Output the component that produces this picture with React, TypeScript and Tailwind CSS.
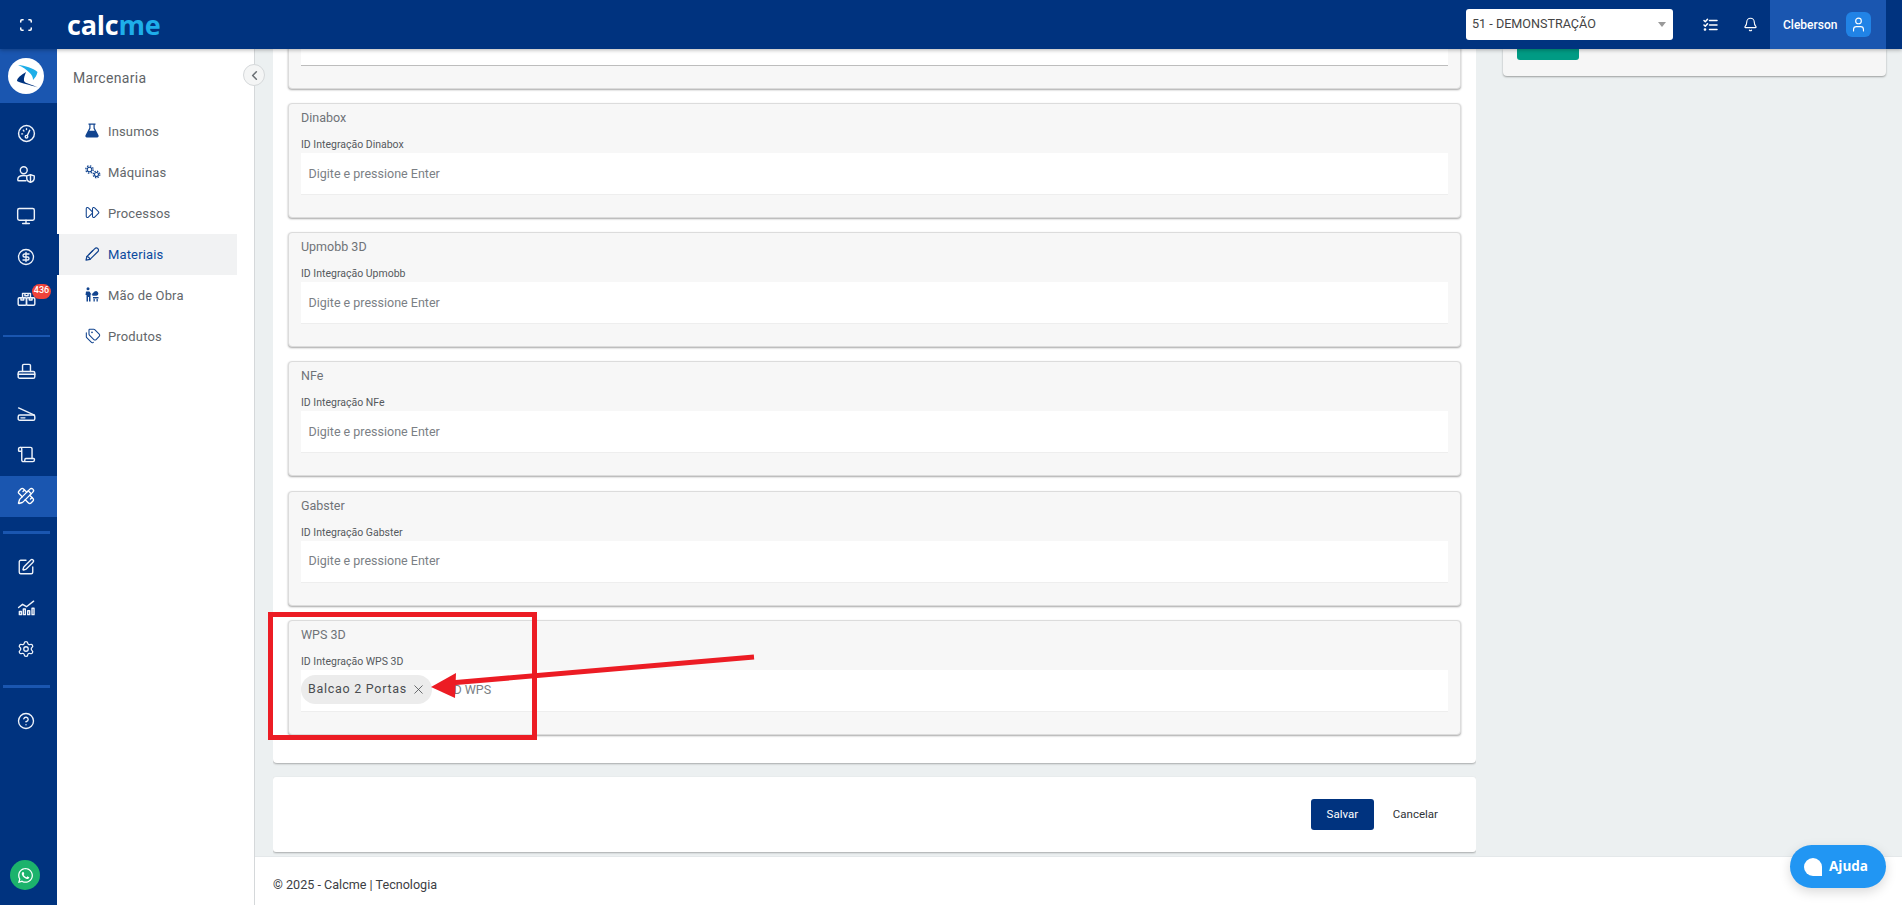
import { Bell, ChevronLeft, CircleDollarSign, CircleHelp, FastForward, Monitor, PencilRuler, Scan, Scroll, Settings, SquarePen, Tags, User, X } from "lucide-react";
import { FaWhatsapp } from "react-icons/fa";
import type { ReactNode } from "react";

const sw = { fill: "none", stroke: "currentColor", strokeWidth: 1.8, strokeLinecap: "round", strokeLinejoin: "round" } as const;

const Svg = ({ children, size = 19 }: { children: ReactNode; size?: number }) => (
  <svg width={size} height={size} viewBox="0 0 24 24" {...sw}>{children}</svg>
);

const GaugeIcon = () => (
  <Svg>
    <circle cx="12" cy="12" r="10" />
    <circle cx="12" cy="16" r="1.6" />
    <path d="M13 14.500 16 8M6 12.500h1M8 8l.7.7M12 6v1" />
  </Svg>
);
const UserShield = () => (
  <svg width="20" height="18" viewBox="0 0 26 24" {...sw} strokeWidth={1.9}>
    <circle cx="10" cy="7" r="4.600" />
    <path d="M13 21H3.500A1.500 1.500 0 0 1 2 19.500C2 16 5 14 10 14c1.500 0 2.500.2 3.500.5" />
    <path d="M19 13l5 1.500v3c0 2.500-2 4.500-5 5.500-3-1-5-3-5-5.500v-3z" />
    <path d="M19 13v10" />
  </svg>
);
const BoxesIcon = () => (
  <Svg>
    <path d="M7 11V5.500h10V11M10 5.500v3h4v-3" />
    <rect x="1.500" y="11" width="10.500" height="9.500" rx="1.500" />
    <rect x="12" y="11" width="10.500" height="9.500" rx="1.500" />
    <path d="M5 11v3h3.500v-3M15.500 11v3H19v-3" />
  </Svg>
);
const PrinterIcon = () => (
  <Svg>
    <path d="M7 12V4.500A1.500 1.500 0 0 1 8.500 3h7A1.500 1.500 0 0 1 17 4.500V12" />
    <rect x="1.500" y="12" width="21" height="8.500" rx="2" />
    <path d="M1.500 15.500h21" />
  </Svg>
);
const ScannerIcon = () => (
  <Svg>
    <path d="M2 5l20 9" />
    <rect x="1.500" y="14" width="21" height="6.500" rx="2" />
    <path d="M5 17.500h5" />
  </Svg>
);
const ChartIcon = () => (
  <Svg>
    <path d="M2 12l5-4 5 3 9-7" />
    <path d="M3 21v-4h2.500v4zM8 21v-7h2.500v7zM13.500 21v-5H16v5zM19 21v-8h2.500v8z" />
  </Svg>
);
const ChecklistIcon = () => (
  <svg width="15" height="13" viewBox="0 0 15 13" fill="none" stroke="currentColor" strokeWidth="1.500" strokeLinecap="round" strokeLinejoin="round">
    <path d="M1 2.500l1.300 1.300L4.500 1.200M1 7l1.300 1.300L4.500 5.700M6.500 2.500H14M6.500 7H14M6.500 11.500H14" />
    <circle cx="2" cy="11.500" r=".6" />
  </svg>
);
const FlaskIcon = () => (
  <svg width="14" height="15" viewBox="0 0 14 15" fill="currentColor">
    <path d="M3.500 0.500h7v1.200H9.700v3.400l3.800 7.200c.5 1-.2 2.200-1.300 2.200H1.800C.7 14.500 0 13.300.5 12.300l3.800-7.200V1.700h-.8zM5.500 1.700v3.700L4.300 7.800h5.400L8.500 5.400V1.700z" fillRule="evenodd" />
  </svg>
);
const GearsIcon = () => (
  <svg width="16" height="14" viewBox="0 0 16 14" fill="none" stroke="currentColor">
    <circle cx="4.500" cy="4.500" r="2.300" strokeWidth="1.100" />
    <circle cx="4.500" cy="4.500" r="3.700" strokeWidth="1.300" strokeDasharray="1.500 1.400" />
    <circle cx="11.500" cy="9.500" r="2" strokeWidth="1.100" />
    <circle cx="11.500" cy="9.500" r="3.300" strokeWidth="1.300" strokeDasharray="1.400 1.200" />
  </svg>
);
const PenIcon = () => (
  <svg width="15" height="14" viewBox="0 0 15 14" fill="none" stroke="currentColor" strokeWidth="1.200" strokeLinejoin="round" strokeLinecap="round">
    <path d="M1 13.200l.9-3.700L9.600 1.800c1-1 2.500-1 3.300-.2.800.8.800 2.300-.2 3.200L5 12.400z" />
    <path d="M1.900 9.500c1.200.1 3 1.700 3.100 2.900M4 7.400l3.700-3.700" />
  </svg>
);
const WorkerIcon = () => (
  <svg width="14" height="15" viewBox="0 0 14 15" fill="currentColor">
    <circle cx="3" cy="1.800" r="1.500" />
    <path d="M1 4.500h3.500l2 3h-1v7H4v-4.500H3v4.500H1.500V8H.5z" />
    <path d="M7 7l2.500-2.500a2.400 2.400 0 1 1 2 4.300H7.500zM8 10h5.500v1.500H8zM8.500 12h1.300v2.500H8.500zM11.500 12h1.300v2.500h-1.300z" />
  </svg>
);
const Swoosh = () => (
  <svg width="36" height="36" viewBox="0 0 36 36">
    <circle cx="18" cy="18" r="18" fill="#fff" />
    <path d="M10 7C17 7.500 25 10 29.500 14 29 17 27 20 25 22 25.500 17 19 11 10 7z" fill="#1eaee8" />
    <path d="M18 14C13 17 9 20 9 23 12 25 22 27 30 29.500 24 26.500 17 25.500 16 23 15.500 20 17 17 18 14z" fill="#00337f" />
  </svg>
);

const menu: [string, ReactNode, boolean][] = [
  ["Insumos", <FlaskIcon />, false],
  ["Máquinas", <GearsIcon />, false],
  ["Processos", <FastForward size={15} strokeWidth={1.7} />, false],
  ["Materiais", <PenIcon />, true],
  ["Mão de Obra", <WorkerIcon />, false],
  ["Produtos", <Tags size={16} strokeWidth={1.6} />, false],
];

const Divider = ({ className }: { className: string }) => (
  <div className={`mx-[3px] w-[47px] shrink-0 bg-[#1a56b0] ${className}`} />
);

const RailRow = ({ children, className }: { children: ReactNode; className: string }) => (
  <div className={`flex shrink-0 items-center justify-center pr-[5px] ${className}`}>{children}</div>
);

const IntegrationCard = ({ title, label, children, line }: { title?: string; label?: string; children?: ReactNode; line?: boolean }) => (
  <section className="mb-[14.2px] h-[115px] shrink-0 rounded-[4px] border border-[#dcdcdc] bg-[#f7f7f7] px-[12px] shadow-[0_1px_2px_rgba(0,0,0,0.35)]">
    <h3 className="h-[27px] pt-[5px] text-[12.5px] leading-[18px] text-[#6f7377]">{title}</h3>
    <div className="mt-[7px] h-[14px] text-[10.5px] leading-[14px] text-[#55595d]">{label}</div>
    <div className={`mt-[1px] flex h-[42px] items-center bg-white ${line ? "border-b border-[#bdbdbd]" : "border-b border-[#eeeeee]"}`}>{children}</div>
  </section>
);

const Placeholder = () => (
  <span className="pl-[7.5px] pt-[1px] text-[12.5px] text-[#7b7f85]">Digite e pressione Enter</span>
);

export default function App() {
  return (
    <div className="relative flex h-[905px] w-[1902px] flex-col overflow-hidden bg-[#ecf0f1] [font-family:Roboto,sans-serif]">
      <header className="relative z-20 flex h-[49px] shrink-0 items-center bg-[#00337f] text-white shadow-[0_1px_4px_rgba(0,0,0,0.3)]">
        <div className="flex w-[51px] items-center justify-center">
          <Scan size={14} strokeWidth={2.6} />
        </div>
        <div className="ml-[16px] text-[27px] font-bold leading-none tracking-[-0.2px] [font-family:'Open_Sans',sans-serif]">
          calc<span className="text-[#1eaeea]">me</span>
        </div>
        <div className="ml-auto flex h-full items-center">
          <div className="flex h-[31px] w-[207px] items-center justify-between rounded-[3px] bg-white pl-[6px] pr-[7px] text-[12.6px] text-[#444]">
            <span>51 - DEMONSTRAÇÃO</span>
            <span className="h-0 w-0 border-x-[4px] border-t-[5px] border-x-transparent border-t-[#999]" />
          </div>
          <div className="ml-[30px] w-[16px]"><ChecklistIcon /></div>
          <div className="ml-[24px] w-[16px]"><Bell size={15} strokeWidth={1.8} /></div>
          <div className="ml-[11px] flex h-full w-[116px] items-center bg-[#1a56b0] pl-[13px]">
            <span className="text-[12px] font-medium">Cleberson</span>
            <span className="ml-[9px] flex h-[25px] w-[25px] items-center justify-center rounded-[6px] bg-[#2183e6]">
              <User size={17} strokeWidth={1.6} />
            </span>
          </div>
          <div className="w-[16px]" />
        </div>
      </header>

      <div className="flex min-h-0 flex-1">
        <aside className="flex w-[57px] shrink-0 flex-col bg-[#00337f] text-[#eef3fa]">
          <div className="flex h-[54px] shrink-0 items-center justify-center bg-[#1a56b0] pr-[5px]">
            <Swoosh />
          </div>
          <div className="h-[9.5px] shrink-0" />
          <RailRow className="h-[41.25px]"><GaugeIcon /></RailRow>
          <RailRow className="h-[41.25px]"><UserShield /></RailRow>
          <RailRow className="h-[41.25px]"><Monitor size={20} strokeWidth={1.7} /></RailRow>
          <RailRow className="h-[41.25px]"><CircleDollarSign size={18} strokeWidth={1.8} /></RailRow>
          <RailRow className="relative h-[41.25px]">
            <BoxesIcon />
            <span className="absolute left-[32px] top-[6px] flex h-[15px] w-[19px] items-center justify-center rounded-full bg-[#f0433a] text-[9px] font-medium text-white">436</span>
          </RailRow>
          <Divider className="mt-[16.25px] h-[2px]" />
          <div className="h-[14px] shrink-0" />
          <RailRow className="h-[41.5px]"><PrinterIcon /></RailRow>
          <RailRow className="h-[41.5px]"><ScannerIcon /></RailRow>
          <RailRow className="h-[41.5px]"><Scroll size={19} strokeWidth={1.8} /></RailRow>
          <RailRow className="h-[41.5px] bg-[#1a56b0] text-white"><PencilRuler size={18} strokeWidth={1.8} /></RailRow>
          <Divider className="mt-[14px] h-[3px]" />
          <div className="h-[12px] shrink-0" />
          <RailRow className="h-[41px]"><SquarePen size={18} strokeWidth={1.8} /></RailRow>
          <RailRow className="h-[41px]"><ChartIcon /></RailRow>
          <RailRow className="h-[41px]"><Settings size={18} strokeWidth={1.7} /></RailRow>
          <Divider className="mt-[16px] h-[3px]" />
          <div className="h-[12.5px] shrink-0" />
          <RailRow className="h-[41px]"><CircleHelp size={18} strokeWidth={1.8} /></RailRow>
          <div className="mb-[15px] ml-[10px] mt-auto flex h-[30px] w-[30px] items-center justify-center rounded-full bg-[#1cb36c] text-white">
            <FaWhatsapp size={17} />
          </div>
        </aside>

        <aside className="relative w-[198px] shrink-0 border-r border-[#d5d8da] bg-white">
          <div className="h-[62px] pl-[16px] pt-[19px] text-[14px] leading-[20px] tracking-[0.3px] text-[#5f6468]">Marcenaria</div>
          <ul className="w-[180px]">
            {menu.map(([name, icon, active]) => (
              <li key={name} className={`flex h-[41px] items-center ${active ? "border-l-2 border-[#00337f] bg-[#f1f2f3] pl-[26px]" : "pl-[28px]"}`}>
                <span className="mb-[2px] flex w-[23px] justify-start text-[#12448f]">{icon}</span>
                <span className={`text-[13px] tracking-[0.15px] ${active ? "text-[#0b4a9e]" : "text-[#63676b]"}`}>{name}</span>
              </li>
            ))}
          </ul>
          <button className="absolute left-[186px] top-[15px] flex h-[22px] w-[22px] items-center justify-center rounded-full border border-[#d5d8da] bg-[#f4f5f5] text-[#6b7075]">
            <ChevronLeft size={15} strokeWidth={2.4} />
          </button>
        </aside>

        <div className="flex min-w-0 flex-1 flex-col">
          <main className="flex min-h-0 flex-1 pl-[18px] pr-[16px]">
            <div className="flex h-full w-[1203px] shrink-0 flex-col justify-end overflow-hidden pb-[4px]">
              <div className="shrink-0 rounded-[4px] bg-white px-[15px] pb-[14px] shadow-[0_1px_2px_rgba(0,0,0,0.3)]">
                <IntegrationCard line />
                <IntegrationCard title="Dinabox" label="ID Integração Dinabox"><Placeholder /></IntegrationCard>
                <IntegrationCard title="Upmobb 3D" label="ID Integração Upmobb"><Placeholder /></IntegrationCard>
                <IntegrationCard title="NFe" label="ID Integração NFe"><Placeholder /></IntegrationCard>
                <IntegrationCard title="Gabster" label="ID Integração Gabster"><Placeholder /></IntegrationCard>
                <IntegrationCard title="WPS 3D" label="ID Integração WPS 3D">
                  <span className="mb-[2px] flex h-[29px] w-[131px] shrink-0 items-center rounded-full bg-[#ececec] pl-[7px] pt-[1px] text-[12.5px] tracking-[0.72px] text-[#4a4d50]">
                    Balcao 2 Portas
                    <X size={15} strokeWidth={1.3} className="ml-[4px]" />
                  </span>
                  <span className="pl-[18px] pt-[1px] text-[12.5px] text-[#7b7f85]">ID WPS</span>
                </IntegrationCard>
              </div>
              <div className="mt-[14px] flex h-[75px] shrink-0 items-center justify-end rounded-[3px] bg-white pr-[38px] shadow-[0_1px_2px_rgba(0,0,0,0.3)]">
                <button className="h-[31px] w-[63px] rounded-[3px] bg-[#00337f] text-[11.5px] text-white">Salvar</button>
                <span className="ml-[19px] text-[11.5px] text-[#2f3337]">Cancelar</span>
              </div>
            </div>
            <div className="ml-[27px] h-[27px] w-[383px] shrink-0 rounded-b-[4px] bg-[#f6f6f6] pl-[14px] shadow-[0_1px_2px_rgba(0,0,0,0.35)]">
              <div className="h-[11px] w-[62px] rounded-b-[3px] bg-[#009b84]" />
            </div>
          </main>
          <footer className="h-[49px] shrink-0 border-t border-[#e4e8ea] bg-white pl-[18px] pt-[19px] text-[12.6px] leading-[18px] text-[#3c4044]">
            © 2025 - Calcme | Tecnologia
          </footer>
        </div>
      </div>

      <button className="absolute left-[1790px] top-[845px] z-30 flex h-[43px] w-[96px] items-center rounded-[22px] bg-[#2196f3] pl-[14px] text-[13.5px] font-bold text-white shadow-[0_4px_12px_rgba(0,0,0,0.15)] [font-family:'Open_Sans',sans-serif]">
        <span className="h-[18px] w-[18px] rounded-[50%_50%_0_50%] bg-white" />
        <span className="ml-[7px]">Ajuda</span>
      </button>

      <div className="absolute left-[268px] top-[612px] z-30 h-[128px] w-[269px] border-[5px] border-[#ec1c24]" />
      <svg className="absolute left-[420px] top-[650px] z-30" width="345" height="60" viewBox="0 0 345 60">
        <path d="M334 7 L30 33" stroke="#ec1c24" strokeWidth="5" fill="none" />
        <path d="M11 37 L36 23 L35 48 Z" fill="#ec1c24" />
      </svg>
    </div>
  );
}
